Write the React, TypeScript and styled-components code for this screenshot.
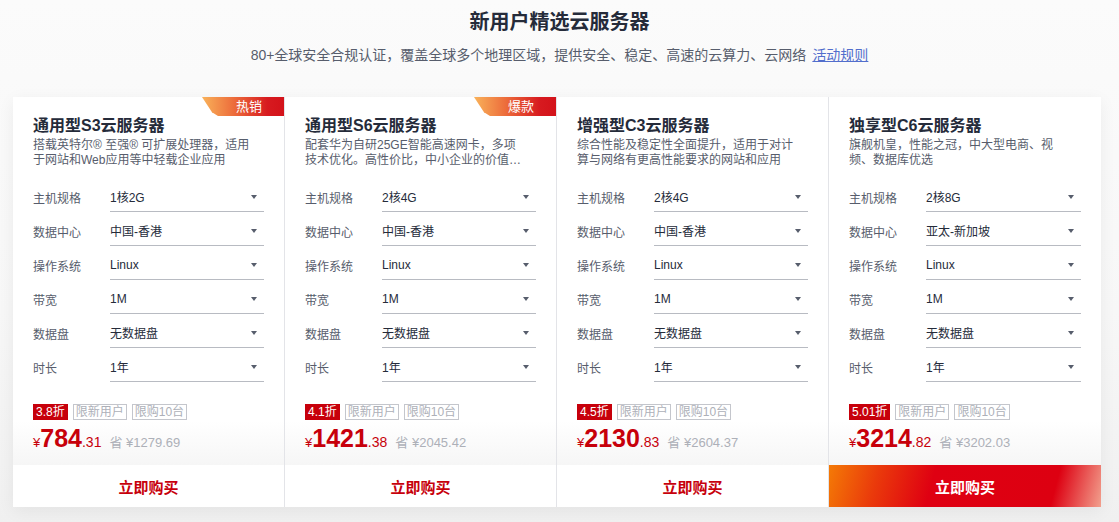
import React from "react";
import styled, { createGlobalStyle } from "styled-components";

const GlobalStyle = createGlobalStyle`
  body {
    margin: 0;
    background: linear-gradient(180deg, #fbfbfb 0%, #f7f7f7 60%, #f0f0f0 100%);
    font-family: "Liberation Sans", "Noto Sans CJK SC", sans-serif;
    color: #252b3a;
  }
`;

const Page = styled.div`
  width: 1119px;
  height: 522px;
  overflow: hidden;
`;

const Head = styled.div`
  text-align: center;
  padding-top: 8px;
`;

const Title = styled.h1`
  margin: 0;
  font-size: 20px;
  line-height: 28px;
  font-weight: 700;
  color: #252b3a;
`;

const Sub = styled.p`
  margin: 8px 0 0;
  font-size: 14px;
  line-height: 22px;
  color: #575d6c;
  a {
    color: #526ecc;
    text-decoration: underline;
    margin-left: 6px;
  }
`;

const Cards = styled.div`
  display: grid;
  grid-template-columns: repeat(4, 272px);
  margin: 31px 0 0 13px;
  width: 1088px;
  background: #fff;
  box-shadow: 0 4px 16px rgba(0, 0, 0, 0.06);
`;

const Card = styled.div<{ $last?: boolean }>`
  position: relative;
  display: flex;
  flex-direction: column;
  height: 410px;
  border-right: ${(p) => (p.$last ? "none" : "1px solid #e3e4e8")};
  box-sizing: border-box;
`;

const Body = styled.div`
  flex: 1;
  padding: 17px 20px 0;
  background: linear-gradient(180deg, #fff 0%, #fff 88%, #f6f6f6 100%);
`;

const Badge = styled.div`
  position: absolute;
  top: 0;
  right: 0;
  width: 82px;
  height: 19px;
  box-sizing: border-box;
  padding-right: 22px;
  text-align: right;
  font-size: 13px;
  line-height: 19px;
  color: #fff;
  background: linear-gradient(90deg, #f9b25a 0%, #ec6a3a 40%, #d71a1f 80%, #d3121a 100%);
  clip-path: polygon(0 0, 100% 0, 100% 100%, 16px 100%, 10px 80%);
`;

const Name = styled.h3`
  margin: 0;
  font-size: 16px;
  line-height: 24px;
  font-weight: 700;
  color: #252b3a;
`;

const Desc = styled.p`
  margin: 0;
  padding-right: 10px;
  font-size: 12px;
  line-height: 15px;
  color: #575d6c;
  height: 30px;
  overflow: hidden;
  display: -webkit-box;
  -webkit-line-clamp: 2;
  -webkit-box-orient: vertical;
`;

const Rows = styled.div`
  margin-top: 15px;
  display: flex;
  flex-direction: column;
  gap: 6px;
`;

const Row = styled.div`
  display: flex;
  align-items: center;
  height: 28px;
`;

const Label = styled.span`
  width: 77px;
  font-size: 12px;
  color: #575d6c;
`;

const Select = styled.div`
  flex: 1;
  height: 28px;
  display: flex;
  align-items: center;
  justify-content: space-between;
  border-bottom: 1px solid #b8bbc2;
  font-size: 12px;
  color: #252b3a;
  padding-right: 7px;
`;

const Caret = styled.span`
  width: 0;
  height: 0;
  border-left: 3px solid transparent;
  border-right: 3px solid transparent;
  border-top: 4px solid #575d6c;
`;

const Tags = styled.div`
  display: flex;
  gap: 5px;
  margin-top: 23px;
`;

const Tag = styled.span<{ $hot?: boolean }>`
  font-size: 12px;
  line-height: 14px;
  padding: 0 2px;
  border: 1px solid ${(p) => (p.$hot ? "#c7000b" : "#c4c6cc")};
  background: ${(p) => (p.$hot ? "#c7000b" : "transparent")};
  color: ${(p) => (p.$hot ? "#fff" : "#adb0b8")};
`;

const Price = styled.div`
  display: flex;
  align-items: baseline;
  margin-top: 3px;
  color: #c7000b;
`;

const Yen = styled.span`
  font-size: 13px;
`;

const Int = styled.span`
  font-size: 25px;
  line-height: 30px;
  font-weight: 700;
`;

const Dec = styled.span`
  font-size: 14px;
`;

const Save = styled.span`
  margin-left: 8px;
  font-size: 13px;
  color: #adb0b8;
`;

const Buy = styled.div<{ $primary?: boolean }>`
  height: 42px;
  display: flex;
  align-items: center;
  justify-content: center;
  font-size: 15px;
  font-weight: 700;
  color: ${(p) => (p.$primary ? "#fff" : "#c7000b")};
  background: ${(p) =>
    p.$primary
      ? "linear-gradient(105deg, #f47a06 0%, #ea3a0b 18%, #df0012 38%, #dd0011 82%, #f2a08e 100%)"
      : "#fff"};
`;

type Product = {
  badge?: string;
  name: string;
  desc: string;
  spec: string;
  region: string;
  discount: string;
  int: string;
  dec: string;
  save: string;
};

const products: Product[] = [
  {
    badge: "热销",
    name: "通用型S3云服务器",
    desc: "搭载英特尔® 至强® 可扩展处理器，适用于网站和Web应用等中轻载企业应用",
    spec: "1核2G",
    region: "中国-香港",
    discount: "3.8折",
    int: "784",
    dec: ".31",
    save: "1279.69",
  },
  {
    badge: "爆款",
    name: "通用型S6云服务器",
    desc: "配套华为自研25GE智能高速网卡，多项技术优化。高性价比，中小企业的价值之选，适用于各类应用",
    spec: "2核4G",
    region: "中国-香港",
    discount: "4.1折",
    int: "1421",
    dec: ".38",
    save: "2045.42",
  },
  {
    name: "增强型C3云服务器",
    desc: "综合性能及稳定性全面提升，适用于对计算与网络有更高性能要求的网站和应用",
    spec: "2核4G",
    region: "中国-香港",
    discount: "4.5折",
    int: "2130",
    dec: ".83",
    save: "2604.37",
  },
  {
    name: "独享型C6云服务器",
    desc: "旗舰机皇，性能之冠，中大型电商、视频、数据库优选",
    spec: "2核8G",
    region: "亚太-新加坡",
    discount: "5.01折",
    int: "3214",
    dec: ".82",
    save: "3202.03",
  },
];

function App() {
  return (
    <Page>
      <GlobalStyle />
      <Head>
        <Title>新用户精选云服务器</Title>
        <Sub>
          80+全球安全合规认证，覆盖全球多个地理区域，提供安全、稳定、高速的云算力、云网络
          <a>活动规则</a>
        </Sub>
      </Head>
      <Cards>
        {products.map((p, i) => {
          const last = i === products.length - 1;
          const rows: [string, string][] = [
            ["主机规格", p.spec],
            ["数据中心", p.region],
            ["操作系统", "Linux"],
            ["带宽", "1M"],
            ["数据盘", "无数据盘"],
            ["时长", "1年"],
          ];
          return (
            <Card key={p.name} $last={last}>
              {p.badge && <Badge>{p.badge}</Badge>}
              <Body>
                <Name>{p.name}</Name>
                <Desc>{p.desc}</Desc>
                <Rows>
                  {rows.map(([k, v]) => (
                    <Row key={k}>
                      <Label>{k}</Label>
                      <Select>
                        {v}
                        <Caret />
                      </Select>
                    </Row>
                  ))}
                </Rows>
                <Tags>
                  <Tag $hot>{p.discount}</Tag>
                  <Tag>限新用户</Tag>
                  <Tag>限购10台</Tag>
                </Tags>
                <Price>
                  <Yen>¥</Yen>
                  <Int>{p.int}</Int>
                  <Dec>{p.dec}</Dec>
                  <Save>省 ¥{p.save}</Save>
                </Price>
              </Body>
              <Buy $primary={last}>立即购买</Buy>
            </Card>
          );
        })}
      </Cards>
    </Page>
  );
}

export default App;
